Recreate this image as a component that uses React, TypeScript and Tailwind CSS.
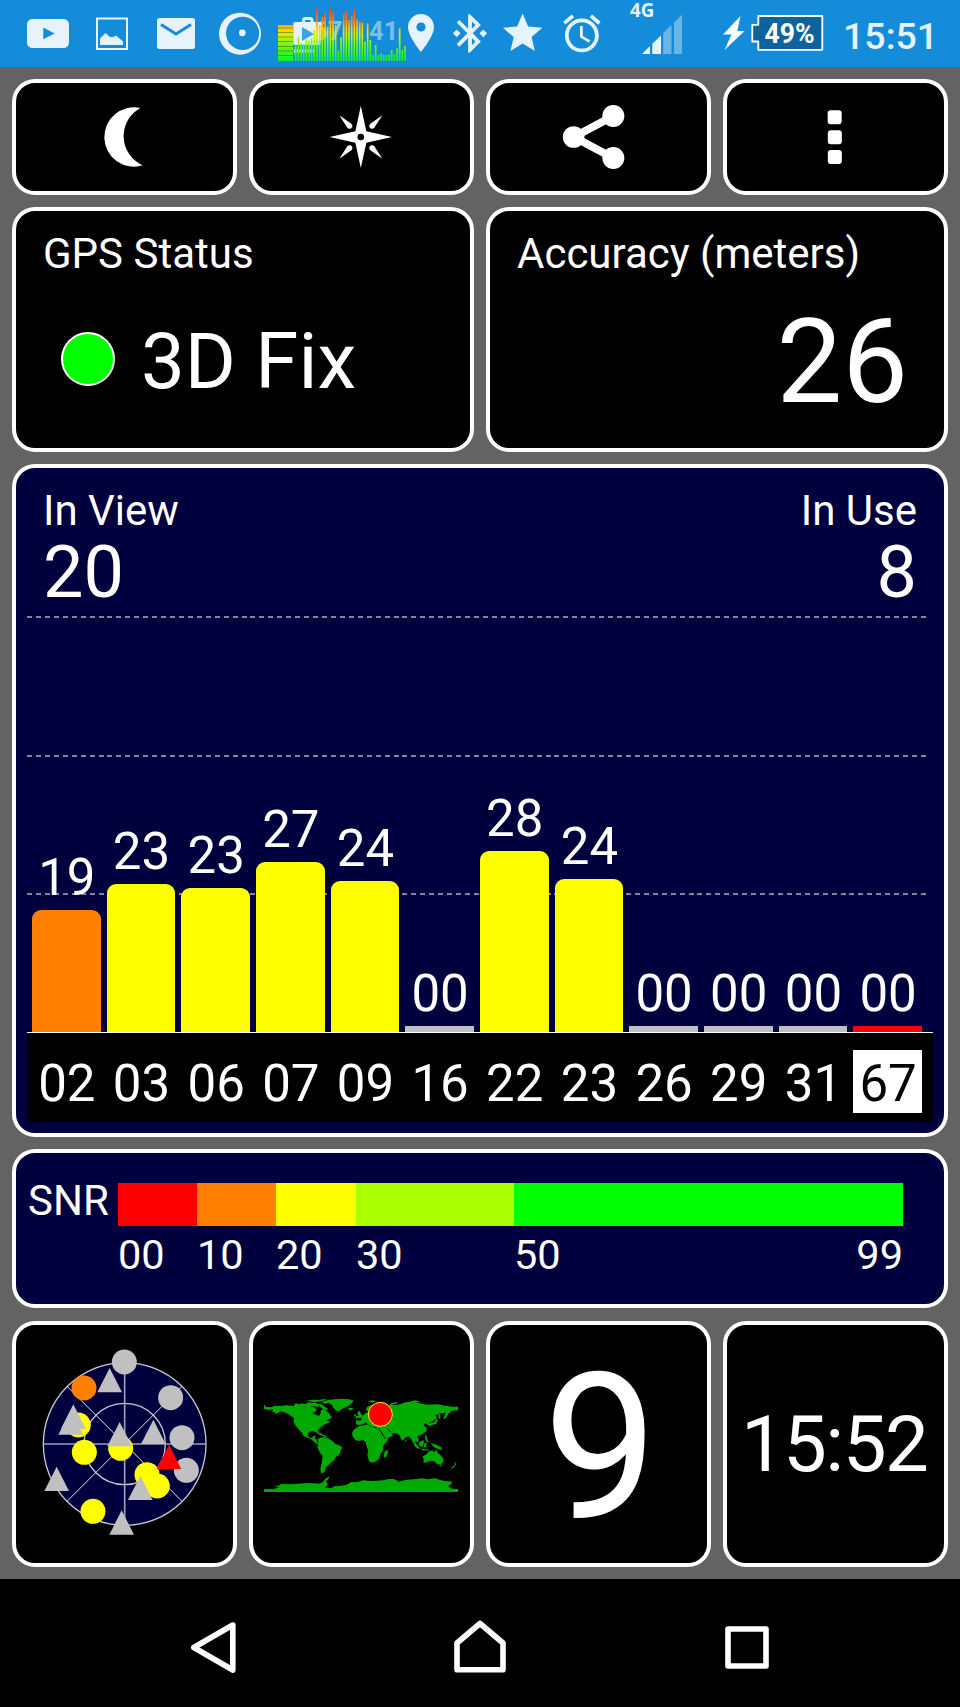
import React from "react";

const ICE = "#e6f3fc";
const BLUE = "#148cda";

function Card({ className = "", children }: { className?: string; children?: React.ReactNode }) {
  return (
    <section className={`overflow-hidden rounded-[23px] border-4 border-white ${className}`}>{children}</section>
  );
}

// Every status glyph spans the full bar height; its viewBox is the slice of the bar it fills.
function Slice({ from, to, children }: { from: number; to: number; children: React.ReactNode }) {
  return (
    <svg
      className="block shrink-0"
      width={to - from}
      height={67}
      viewBox={`${from} 0 ${to - from} 67`}
      fill={ICE}
      fontFamily="Roboto, sans-serif"
    >
      {children}
    </svg>
  );
}

const spectrum = [
  137, 110, 130, 132, 118, 122, 115, 90, 25, 75, 50, 40, 80, 24, 38, 75, 152, 112, 42, 32, 60, 48, 28, 57, 65, 68, 125,
  70, 120, 165, 135, 165, 160, 165, 165, 163, 150, 163, 145, 85, 150, 138,
];

function StatusBar() {
  return (
    <header className="flex h-[67px] w-full bg-[#148cda]">
      <Slice from={0} to={82}>
        <rect x="27" y="19" width="42" height="29" rx="5.5" />
        <path d="M43.3 27.5V39.3L54.6 33.4Z" fill={BLUE} />
      </Slice>
      <Slice from={82} to={142}>
        <rect x="97" y="18.5" width="30" height="30.5" fill="none" stroke={ICE} strokeWidth="2" />
        <path d="M100 45V38.5L105.5 33L110 37H113.5L116 35.5L123 41.5V45Z" />
      </Slice>
      <Slice from={142} to={207}>
        <rect x="157" y="18" width="38" height="31" rx="2.5" />
        <path d="M161 24.4L176 34L191 24.4" fill="none" stroke={BLUE} strokeWidth="3" />
      </Slice>
      <Slice from={207} to={270}>
        <circle cx="240" cy="33.7" r="21" />
        <circle cx="242.6" cy="33.3" r="16.6" fill={BLUE} />
        <circle cx="242.3" cy="32.8" r="3.4" />
      </Slice>
      <Slice from={270} to={407}>
        <defs>
          <linearGradient id="level" gradientUnits="userSpaceOnUse" x1="0" y1="8" x2="0" y2="61">
            <stop offset="0" stopColor="#ff3a20" />
            <stop offset="0.22" stopColor="#ff7d18" />
            <stop offset="0.38" stopColor="#ffc808" />
            <stop offset="0.5" stopColor="#d8f000" />
            <stop offset="0.7" stopColor="#6cf81c" />
            <stop offset="1" stopColor="#08f428" />
          </linearGradient>
        </defs>
        <rect x="278" y="25" width="15.3" height="36" fill="url(#level)" />
        {[27.5, 32, 36.5, 41, 46, 50.5, 55].map((y) => (
          <rect key={y} x="278" y={y} width="15.3" height="1" fill="#5a7a00" fillOpacity="0.65" />
        ))}
        <path
          d="M295 22H302V20.5Q302 17 305.5 17H310Q313.5 17 313.5 20.5V22H320.5Q322 22 322 23.5L320.5 43Q320.3 45 318.5 45H295Q293.3 45 293.3 43V23.5Q293.3 22 295 22ZM305 22H310.5V20H305Z"
          fillRule="evenodd"
        />
        <path d="M302 27V41L314 34Z" fill={BLUE} fillOpacity="0.8" />
        <path d="M294 51H314" stroke={ICE} strokeWidth="3.5" strokeDasharray="1.7 1" />
        <text x="313" y="39.5" fontSize="25.5" fontWeight="700" fillOpacity="0.55">67</text>
        <text x="369" y="39.5" fontSize="25.5" fontWeight="700" fillOpacity="0.5">41</text>
        {spectrum.map((top, i) => (
          <rect key={i} x={294.8 + i * 2.667} y={top / 3} width="1.7" height={61 - top / 3} fill="url(#level)" />
        ))}
      </Slice>
      <Slice from={407} to={445}>
        <path
          d="M421 14C413.7 14 408 19.7 408 27C408 36.5 421 52 421 52C421 52 434 36.5 434 27C434 19.7 428.3 14 421 14ZM421 31.6A4.6 4.6 0 1 1 421 22.4A4.6 4.6 0 0 1 421 31.6Z"
          fillRule="evenodd"
        />
      </Slice>
      <Slice from={445} to={495}>
        <path
          transform="translate(447.2 10.3) scale(1.9 1.92)"
          d="M7 12l-2-2-2 2 2 2 2-2zm10.71-4.29L12 2h-1v7.59L6.41 5 5 6.41 10.59 12 5 17.59 6.41 19 11 14.41V22h1l5.71-5.71-4.3-4.29 4.3-4.29zM13 5.83l1.88 1.88L13 9.59V5.83zm1.88 10.46L13 18.17v-3.76l1.88 1.88zM19 10l-2 2 2 2 2-2-2-2z"
        />
      </Slice>
      <Slice from={495} to={552}>
        <path
          transform="translate(499 9.6) scale(1.97)"
          d="M12 17.27L18.18 21l-1.64-7.03L22 9.24l-7.19-.61L12 2 9.19 8.63 2 9.24l5.46 4.73L5.82 21z"
        />
      </Slice>
      <Slice from={552} to={615}>
        <path
          transform="translate(559.3 11) scale(1.88)"
          d="M22 5.72l-4.6-3.86-1.29 1.53 4.6 3.86L22 5.72zM7.88 3.39L6.6 1.86 2 5.71l1.29 1.53 4.59-3.85zM12.5 8H11v6l4.75 2.85.75-1.23-4-2.37V8zM12 4c-4.97 0-9 4.03-9 9s4.02 9 9 9c4.97 0 9-4.03 9-9s-4.03-9-9-9zm0 16c-3.87 0-7-3.13-7-7s3.13-7 7-7 7 3.13 7 7-3.13 7-7 7z"
        />
      </Slice>
      <Slice from={615} to={700}>
        <text x="630" y="16.7" fontSize="18.7" fontWeight="700" fontFamily="'Open Sans', sans-serif">4G</text>
        <path d="M642 54L650 46V54ZM652.3 43.7L661 35.5V54H652.3Z" />
        <path d="M663.2 33L671.5 25V54H663.2ZM674 22.5L682 14.5V54H674Z" fillOpacity="0.4" />
      </Slice>
      <Slice from={700} to={835}>
        <path d="M740.5 16L723 34.5H731.5L724.5 50L744.5 31H737.3Z" fill="#fff" />
        <path
          d="M758.3 16H822.3V49.8H758.3V41.5H752.3V24.8H758.3Z"
          fill="#0e639d"
          stroke="#fff"
          strokeWidth="1.8"
          strokeLinejoin="round"
        />
        <text
          x="764.5"
          y="42.5"
          fontSize="27.5"
          fontWeight="700"
          fill="#fff"
          textLength="50"
          lengthAdjust="spacingAndGlyphs"
        >
          49%
        </text>
      </Slice>
      <span className="ml-[8px] text-[37.5px] leading-[72px] font-medium text-[#e6f3fc]">15:51</span>
    </header>
  );
}

function Toolbar() {
  const spike = "M1018 151L1055 177Q1058 181 1057 186L1052 191Q1048 192 1043 190Z";
  return (
    <div className="grid h-[116px] grid-cols-4 gap-3">
      <Card className="bg-black">
        <svg className="block h-[108px] w-[217px]" viewBox="48 54 651 324" fill="#fff">
          <path d="M421 129A89 89 0 1 0 428 301A96 96 0 0 1 421 129Z" />
        </svg>
      </Card>
      <Card className="bg-black">
        <svg className="block h-[108px] w-[217px]" viewBox="759 54 651 324" fill="#fff">
          <path d="M1082.5 122L1099 199L1176 216L1099 233L1082.5 309L1066 233L989 216L1066 199Z" />
          <path d={spike} />
          <path d={spike} transform="matrix(-1 0 0 1 2165 0)" />
          <path d={spike} transform="matrix(1 0 0 -1 0 432)" />
          <path d={spike} transform="matrix(-1 0 0 -1 2165 432)" />
          <circle cx="1082.5" cy="216" r="10" fill="#000" />
        </svg>
      </Card>
      <Card className="bg-black">
        <svg className="block h-[108px] w-[217px]" viewBox="30 54 651 324" fill="#fff">
          <path d="M400 153L281 216L400 279" fill="none" stroke="#fff" strokeWidth="23" />
          <circle cx="281" cy="216" r="32.5" />
          <circle cx="400" cy="153" r="33" />
          <circle cx="400" cy="279" r="33" />
        </svg>
      </Card>
      <Card className="bg-black">
        <svg className="block h-[108px] w-[217px]" viewBox="741 54 651 324" fill="#fff">
          <rect x="1043" y="136" width="42" height="42" rx="9" />
          <rect x="1043.5" y="195.500" width="42" height="42" rx="9" />
          <rect x="1043.5" y="255" width="42" height="42" rx="9" />
        </svg>
      </Card>
    </div>
  );
}

const satellites = [
  { id: "02", snr: "19", height: 122, fill: "bg-[#ff8000]" },
  { id: "03", snr: "23", height: 148, fill: "bg-[#ffff00]" },
  { id: "06", snr: "23", height: 144, fill: "bg-[#ffff00]" },
  { id: "07", snr: "27", height: 170, fill: "bg-[#ffff00]" },
  { id: "09", snr: "24", height: 151, fill: "bg-[#ffff00]" },
  { id: "16", snr: "00", height: 6, fill: "bg-[#c0c0c0]" },
  { id: "22", snr: "28", height: 181, fill: "bg-[#ffff00]" },
  { id: "23", snr: "24", height: 153, fill: "bg-[#ffff00]" },
  { id: "26", snr: "00", height: 6, fill: "bg-[#c0c0c0]" },
  { id: "29", snr: "00", height: 6, fill: "bg-[#c0c0c0]" },
  { id: "31", snr: "00", height: 6, fill: "bg-[#c0c0c0]" },
  { id: "67", snr: "00", height: 6, fill: "bg-[#ff0000]", selected: true },
];

function SignalChart() {
  const rule = "mr-[3px] h-[2px] bg-[repeating-linear-gradient(90deg,#8484a0_0_5px,transparent_5px_8.94px)]";
  return (
    <Card className="flex h-[673px] flex-col bg-[#00003f]">
      <div className="flex h-[148px] justify-between px-[27px] pt-[22px]">
        <div>
          <div className="text-[42px] leading-none">In View</div>
          <div className="mt-[5px] text-[72px] leading-none">20</div>
        </div>
        <div className="text-right">
          <div className="text-[42px] leading-none">In Use</div>
          <div className="mt-[5px] text-[72px] leading-none">8</div>
        </div>
      </div>
      <div className="relative mx-[11px] h-[416px]">
        <div className="absolute inset-0 flex flex-col gap-[136.5px]">
          <div className={rule} />
          <div className={rule} />
          <div className={rule} />
        </div>
        <div className="relative flex h-full items-end gap-[6px] pl-[5px]">
          {satellites.map((s) => (
            <div key={s.id} className="flex w-[68.670px] flex-col items-center">
              <div className="mb-[7px] pl-px text-[51px] leading-none">{s.snr}</div>
              <div
                className={`w-full ${s.height > 6 ? "rounded-t-[9px]" : ""} ${s.fill}`}
                style={{ height: s.height }}
              />
            </div>
          ))}
        </div>
      </div>
      <div className="mx-[11px] flex h-[90px] gap-[6px] border-t border-white bg-black pt-[17px] pl-[5px]">
        {satellites.map((s) => (
          <div
            key={s.id}
            className={`flex h-[63px] w-[68.670px] items-start justify-center pt-[8px] pl-px text-[51px] leading-none ${
              s.selected ? "bg-white text-black" : ""
            }`}
          >
            {s.id}
          </div>
        ))}
      </div>
    </Card>
  );
}

function SnrLegend() {
  return (
    <Card className="mb-px flex h-[159px] bg-[#00003f] pt-[30px] pl-[12px]">
      <div className="w-[90px] text-[42px] leading-[35px]">SNR</div>
      <div className="grid w-[785px] grid-cols-[79px_79px_80px_158px_389px] grid-rows-[43px_50px] text-[41.5px] leading-[57px]">
        <div className="bg-[#ff0000]" />
        <div className="bg-[#ff8000]" />
        <div className="bg-[#ffff00]" />
        <div className="bg-[#aaff00]" />
        <div className="bg-[#00ff00]" />
        <span>00</span>
        <span>10</span>
        <span>20</span>
        <span>30</span>
        <span className="flex justify-between">
          <span>50</span>
          <span>99</span>
        </span>
      </div>
    </Card>
  );
}

const tri = (x: number, y: number) => `M${x} ${y}L${x + 37} ${y + 73}H${x - 37}Z`;

function SkyView() {
  return (
    <svg className="block h-[238px] w-[217px]" viewBox="48 45 651 714">
      <circle cx="374" cy="402" r="244" fill="#00003f" stroke="#c6c6d0" strokeWidth="4" />
      <circle cx="374" cy="402" r="122" fill="none" stroke="#c6c6d0" strokeWidth="4" />
      <path d="M374 158V646M130 402H618" stroke="#9d9db4" strokeWidth="5" />
      <path d="M201 229L546 574M546 229L201 574" stroke="#e4e4ec" strokeWidth="3" />
      <g fill="#c0c0c0">
        <circle cx="373" cy="156" r="37.5" />
        <circle cx="512" cy="263" r="37.5" />
        <circle cx="546" cy="383" r="37.5" />
        <circle cx="559" cy="481" r="37.5" />
      </g>
      <circle cx="252" cy="234" r="37.5" fill="#ff8000" />
      <g fill="#ffff00">
        <circle cx="235" cy="345" r="37.5" />
        <circle cx="253" cy="427" r="37.5" />
        <circle cx="362" cy="415" r="37.5" />
        <circle cx="441" cy="494" r="37.5" />
        <circle cx="472" cy="528" r="37.5" />
        <circle cx="279" cy="604" r="37.5" />
      </g>
      <g fill="#c0c0c0">
        <path d={tri(329, 174)} />
        <path d={tri(212, 301)} />
        <path d={tri(220, 283)} />
        <path d={tri(359, 336)} />
        <path d={tri(460, 329)} />
        <path d={tri(170, 470)} />
        <path d={tri(421, 497)} />
        <path d={tri(365, 601)} />
      </g>
      <path d={tri(507, 404)} fill="#ff0000" />
    </svg>
  );
}

function WorldMap() {
  return (
    <svg className="block h-[238px] w-[217px]" viewBox="24 -135 651 714" fill="#00aa00">
      {/* Americas */}
      <path d="M57 103L62 110L80 112L88 107L108 108L124 106L146 108L170 109L192 110L208 112L216 121L206 127L203 132L215 136L223 137L226 131L228 119L238 117L244 124L251 128L257 138L262 142L252 148L244 151L256 155L248 160L240 163L232 168L224 174L218 181L219 192L213 187L204 183L192 186L188 194L192 202L201 204L206 197L212 197L209 205L215 209L216 217L226 222L221 225L208 217L199 208L185 202L175 198L172 190L160 177L149 163L145 151L148 145L134 135L122 128L108 124L99 129L84 136L94 128L82 126L84 118L70 120L57 117Z" />
      <path d="M146 108L152 100L164 103L170 100L181 102L190 97L203 99L212 97L222 105L220 111L204 109L190 113L178 109L164 111ZM184 92L204 89L222 90L238 87L246 90L230 94L213 96L198 95ZM216 101L230 103L240 110L250 117L240 121L229 113ZM206 130L212 132L209 136ZM228 134L233 137L229 140Z" />
      <path d="M230 97L246 91L266 88L292 86L313 88L326 92L319 101L311 107L303 111L291 117L280 125L273 121L265 114L261 105L250 99L240 101ZM310 114L321 114L326 118L318 121L311 119Z" />
      <path d="M218 207L227 203L240 202L253 207L265 215L272 223L283 226L292 232L287 242L283 254L273 260L267 271L257 279L250 287L241 292L242 300L236 308L228 309L226 296L230 280L233 258L225 248L217 232L221 222Z" />
      <path d="M215 189L228 190L237 196L250 199L241 201L225 195ZM219 184L229 187L221 188Z" />
      {/* Eurasia */}
      <path d="M333 162L333 151L345 152L351 146L344 141L355 136L362 129L372 124L362 121L366 111L380 105L394 101L412 103L430 109L438 103L449 106L466 103L480 97L502 95L522 99L546 104L578 103L601 107L621 110L639 110V121L621 122L610 132L602 145L594 148L603 128L588 130L570 136L576 144L567 151L554 158L548 166L541 160L536 166L545 174L544 184L532 193L522 196L516 199L521 208L519 218L510 213L514 226L520 237L510 230L505 216L499 208L491 199L480 203L474 212L469 208L463 195L453 190L439 190L444 196L434 202L418 207L410 196L401 180L393 171L379 170L372 165L362 157L350 164L341 165Z" />
      <path d="M333 145L333 138L341 138L336 128L343 122L348 131L354 139L347 143ZM327 134L333 132L332 139L326 139ZM369 93L384 91L394 94L380 98ZM430 108L438 100L454 96L460 99L444 103ZM493 95L511 91L528 96L510 98Z" />
      <path d="M548 165L557 158L568 157L574 146L579 151L573 162L561 165L553 169ZM581 146L580 131L586 134L586 146Z" />
      {/* Africa */}
      <path d="M343 168L361 165L370 162L374 169L389 173L401 176L408 190L418 205L431 204L426 214L414 228L414 242L406 253L403 266L391 275L378 278L371 270L367 254L370 242L365 230L362 216L355 211L341 213L331 210L323 199L321 190L326 179L335 173ZM418 247L426 240L430 243L424 262L416 262Z" />
      <path d="M401 175L421 207M427 176L437 186" stroke="#000" strokeWidth="3" />
      {/* Islands and Oceania */}
      <path d="M499 211L508 216L520 229L527 238L519 235L510 226ZM521 218L535 210L537 218L533 230L523 229ZM540 194L547 201L547 211L554 219L546 216L541 208ZM538 219L548 218L543 224L546 232L537 232ZM557 219L573 224L588 231L592 241L578 236L566 231ZM525 236L540 238L553 239L552 242L532 241ZM480 207L485 212L481 215Z" />
      <path d="M532 260L545 252L550 245L562 241L567 247L573 239L579 249L588 257L596 267L594 277L587 284L575 281L567 273L555 273L542 278L534 277L537 269ZM583 286L591 286L588 291ZM629 276L635 282L625 293L617 298L621 291L630 285Z" />
      {/* Antarctica */}
      <path d="M57 357L84 358L102 352L85 347L102 347L109 342L137 343L158 341L188 339L207 340L223 341L234 336L240 327L253 319L250 328L243 334L249 344L238 353L259 355L267 349L286 348L305 344L318 336L335 337L354 331L376 333L393 332L415 331L430 327L447 327L462 335L480 330L505 328L531 325L549 328L569 325L594 332L622 335L619 343L609 348L621 356L639 357V366H57Z" />
      <circle cx="406" cy="133" r="36" fill="#ff0000" stroke="#fff000" strokeWidth="3" />
    </svg>
  );
}

function NavIcon({ viewBox, d }: { viewBox: string; d: string }) {
  return (
    <div className="flex items-center justify-center">
      <svg
        width="60"
        height="128"
        viewBox={viewBox}
        fill="none"
        stroke="#fff"
        strokeWidth="5.6"
        strokeLinejoin="round"
      >
        <path d={d} />
      </svg>
    </div>
  );
}

function NavBar() {
  return (
    <nav className="grid h-[128px] grid-cols-3 bg-black px-20">
      <NavIcon viewBox="183 1579 60 128" d="M232.800 1625L193.800 1647.500L232.800 1670Z" />
      <NavIcon viewBox="450 1579 60 128" d="M480 1623.500L503 1643V1669.800H457V1643Z" />
      <NavIcon viewBox="717 1579 60 128" d="M728 1629H766V1666H728Z" />
    </nav>
  );
}

export default function App() {
  return (
    <main className="flex h-[1707px] w-[960px] flex-col overflow-hidden bg-[#636363] font-['Roboto',sans-serif] text-white">
      <StatusBar />
      <div className="flex flex-1 flex-col gap-3 p-3">
        <Toolbar />
        <div className="grid h-[245px] grid-cols-2 gap-3">
          <Card className="bg-black px-[27px] pt-[22px]">
            <div className="text-[42px] leading-none">GPS Status</div>
            <div className="mt-[48px] flex items-start pl-[18px]">
              <div className="mt-[9px] mr-[26px] size-[54px] rounded-full border-2 border-white bg-[#00ff00]" />
              <div className="text-[78px] leading-none">3D Fix</div>
            </div>
          </Card>
          <Card className="bg-black pt-[22px] pr-[36px] pl-[27px]">
            <div className="text-[42px] leading-none">Accuracy (meters)</div>
            <div className="mt-[29px] text-right text-[117px] leading-none">26</div>
          </Card>
        </div>
        <SignalChart />
        <SnrLegend />
        <div className="grid h-[246px] grid-cols-4 gap-3">
          <Card className="bg-black">
            <SkyView />
          </Card>
          <Card className="bg-black">
            <WorldMap />
          </Card>
          <Card className="bg-black pt-[22px] pl-[4px] text-center text-[204px] leading-none">9</Card>
          <Card className="bg-black pt-[81px] pr-[3px] text-center text-[78px] leading-none tracking-[-1.6px]">
            15:52
          </Card>
        </div>
      </div>
      <NavBar />
    </main>
  );
}
